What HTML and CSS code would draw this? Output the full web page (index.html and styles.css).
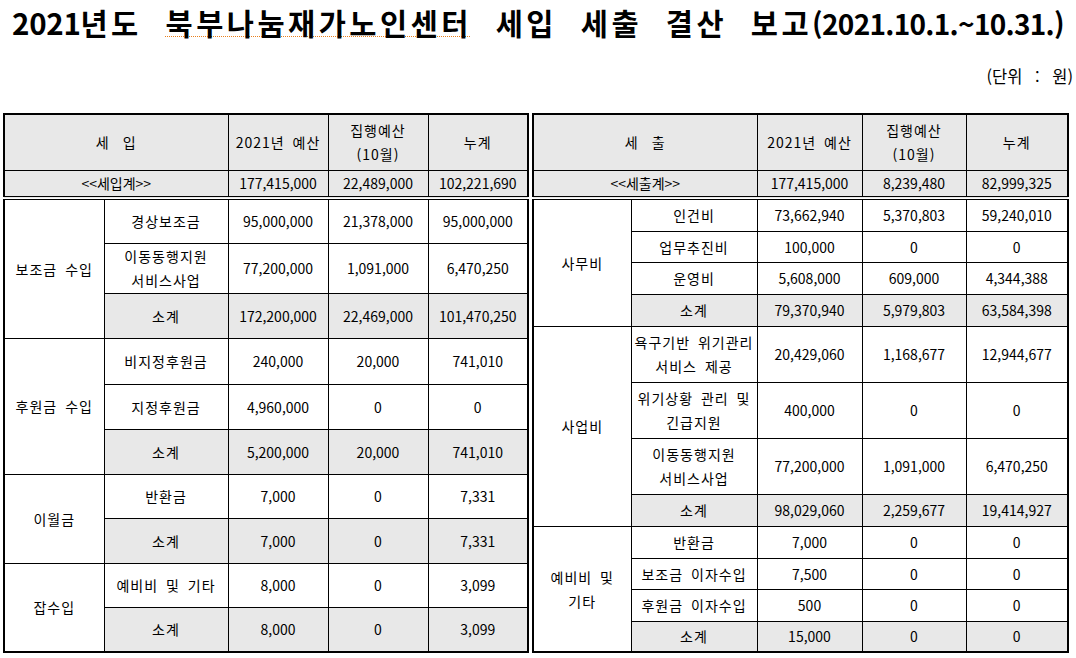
FILE: index.html
```html
<!DOCTYPE html>
<html lang="ko">
<head>
<meta charset="utf-8">
<link rel="stylesheet" href="styles.css">
</head>
<body>
<h1 class="title"><span class="yr">2021</span>년도 <span class="squiggle">북부나눔재가노인센터</span> 세입 세출 결산 보고<span class="date">(2021.10.1.~10.31.)</span></h1>
<div class="unit">(단위 : 원)</div>
<div class="tables">
  <table class="sheet left">
    <colgroup><col class="ca"><col class="cb"><col class="cc"><col class="cd"><col class="ce"></colgroup>
    <tr class="r-head gray"><td colspan="2"><span class="spread">세</span>입</td><td>2021년 예산</td><td>집행예산<br>(10월)</td><td>누계</td></tr>
    <tr class="r-total gray"><td colspan="2">&lt;&lt;세입계&gt;&gt;</td><td>177,415,000</td><td>22,489,000</td><td>102,221,690</td></tr>
    <tr class="l45"><td rowspan="3" class="grp">보조금 수입</td><td>경상보조금</td><td>95,000,000</td><td>21,378,000</td><td>95,000,000</td></tr>
    <tr class="l50"><td>이동동행지원<br>서비스사업</td><td>77,200,000</td><td>1,091,000</td><td>6,470,250</td></tr>
    <tr class="l45 gray"><td>소계</td><td>172,200,000</td><td>22,469,000</td><td>101,470,250</td></tr>
    <tr class="l46"><td rowspan="3" class="grp">후원금 수입</td><td>비지정후원금</td><td>240,000</td><td>20,000</td><td>741,010</td></tr>
    <tr class="l45"><td>지정후원금</td><td>4,960,000</td><td>0</td><td>0</td></tr>
    <tr class="l45 gray"><td>소계</td><td>5,200,000</td><td>20,000</td><td>741,010</td></tr>
    <tr class="l44"><td rowspan="2" class="grp">이월금</td><td>반환금</td><td>7,000</td><td>0</td><td>7,331</td></tr>
    <tr class="l45 gray"><td>소계</td><td>7,000</td><td>0</td><td>7,331</td></tr>
    <tr class="l44"><td rowspan="2" class="grp">잡수입</td><td>예비비 및 기타</td><td>8,000</td><td>0</td><td>3,099</td></tr>
    <tr class="l45 gray"><td>소계</td><td>8,000</td><td>0</td><td>3,099</td></tr>
  </table>
  <table class="sheet right">
    <colgroup><col class="ra"><col class="rb"><col class="rc"><col class="rd"><col class="re"></colgroup>
    <tr class="r-head gray"><td colspan="2"><span class="spread">세</span>출</td><td>2021년 예산</td><td>집행예산<br>(10월)</td><td>누계</td></tr>
    <tr class="r-total gray"><td colspan="2">&lt;&lt;세출계&gt;&gt;</td><td>177,415,000</td><td>8,239,480</td><td>82,999,325</td></tr>
    <tr class="l33"><td rowspan="4" class="grp">사무비</td><td>인건비</td><td>73,662,940</td><td>5,370,803</td><td>59,240,010</td></tr>
    <tr class="l31"><td>업무추진비</td><td>100,000</td><td>0</td><td>0</td></tr>
    <tr class="l32"><td>운영비</td><td>5,608,000</td><td>609,000</td><td>4,344,388</td></tr>
    <tr class="l32 gray"><td>소계</td><td>79,370,940</td><td>5,979,803</td><td>63,584,398</td></tr>
    <tr class="l56"><td rowspan="4" class="grp">사업비</td><td>욕구기반 위기관리<br>서비스 제공</td><td>20,429,060</td><td>1,168,677</td><td>12,944,677</td></tr>
    <tr class="l56"><td>위기상황 관리 및<br>긴급지원</td><td>400,000</td><td>0</td><td>0</td></tr>
    <tr class="l56"><td>이동동행지원<br>서비스사업</td><td>77,200,000</td><td>1,091,000</td><td>6,470,250</td></tr>
    <tr class="l32 gray"><td>소계</td><td>98,029,060</td><td>2,259,677</td><td>19,414,927</td></tr>
    <tr class="l32"><td rowspan="4" class="grp">예비비 및<br>기타</td><td>반환금</td><td>7,000</td><td>0</td><td>0</td></tr>
    <tr class="l31"><td>보조금 이자수입</td><td>7,500</td><td>0</td><td>0</td></tr>
    <tr class="l32"><td>후원금 이자수입</td><td>500</td><td>0</td><td>0</td></tr>
    <tr class="l31 gray"><td>소계</td><td>15,000</td><td>0</td><td>0</td></tr>
  </table>
</div>
</body>
</html>
```

FILE: styles.css
```css
* { box-sizing: border-box; }
html, body { margin: 0; padding: 0; background: #fff; }
body {
  width: 1076px;
  height: 658px;
  overflow: hidden;
  font-family: "Noto Sans CJK KR", "Noto Sans", sans-serif;
  color: #000;
}
.title {
  margin: 0;
  padding-top: 2px;
  height: 42px;
  line-height: 40px;
  font-size: 29.5px;
  font-weight: 700;
  text-align: center;
  white-space: nowrap;
  word-spacing: 12px;
  letter-spacing: 3.5px;
}
.title .yr { letter-spacing: -0.3px; }
.title .date { font-size: 28px; word-spacing: 0; letter-spacing: -0.7px; }
.squiggle {
  text-decoration: underline dotted #e8801e;
  text-decoration-thickness: 1px;
  text-underline-offset: 1px;
}
.unit {
  margin-top: 24px;
  height: 20px;
  line-height: 20px;
  font-size: 16.5px;
  text-align: right;
  padding-right: 3px;
  word-spacing: 8px;
}
.tables {
  display: flex;
  gap: 3px;
  padding-left: 3px;
  margin-top: 27px;
  align-items: flex-start;
}
.sheet {
  border-collapse: collapse;
  table-layout: fixed;
  border: 2px solid #000;
  font-size: 14px;
  line-height: 24px;
}
.sheet td {
  border: 1px solid #000;
  padding: 0;
  text-align: center;
  vertical-align: middle;
  white-space: nowrap;
  word-spacing: 3px;
  background: #fff;
}
.sheet td:nth-last-child(n+4),
.sheet .r-head td { letter-spacing: 1px; }
.sheet .r-total td { letter-spacing: 0; }
.sheet.left { width: 524px; }
.sheet.right { width: 535px; }
.ca { width: 100px; } .cb { width: 124px; } .cc { width: 100px; } .cd { width: 100px; } .ce { width: 100px; }
.ra { width: 98px; } .rb { width: 126px; } .rc { width: 105px; } .rd { width: 104px; } .re { width: 102px; }
.gray td { background: #e8e8e8; }
.gray td.grp { background: #fff; }
.r-head td { height: 56px; }
.r-total td { height: 28px; border-bottom: 4px double #000; }
.spread { margin-right: 13px; }
.l31 td { height: 31px; }
.l32 td { height: 32px; }
.l33 td { height: 33px; }
.l44 td { height: 44px; }
.l45 td { height: 45px; }
.l46 td { height: 46px; }
.l50 td { height: 50px; }
.l56 td { height: 56px; }
```
